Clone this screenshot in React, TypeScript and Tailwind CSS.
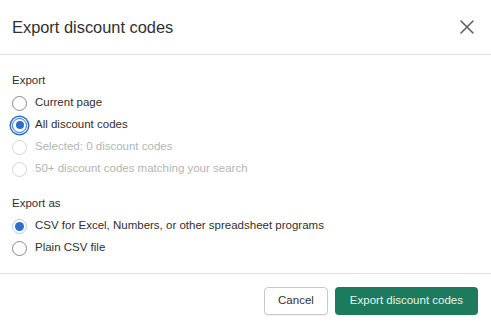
import React from "react";

type RadioState = "off" | "on" | "focus" | "disabled";

function Radio({ state }: { state: RadioState }) {
  if (state === "off") {
    return <span className="block w-[15px] h-[15px] rounded-full border border-[#8a8a8a] bg-white" />;
  }
  if (state === "disabled") {
    return <span className="block w-[15px] h-[15px] rounded-full border border-[#d4d4d4] bg-white" />;
  }
  if (state === "on") {
    return (
      <span className="flex items-center justify-center w-[15px] h-[15px] rounded-full border border-[#b9c9e2] bg-white">
        <span className="block w-[9px] h-[9px] rounded-full bg-[#2c6ecb]" />
      </span>
    );
  }
  return (
    <span className="flex items-center justify-center w-[15px] h-[15px] rounded-full border-[1.5px] border-[#2c6ecb] bg-white shadow-[0_0_0_1px_#ffffff,0_0_0_2.5px_#2c6ecb]">
      <span className="block w-[8px] h-[8px] rounded-full bg-[#2c6ecb]" />
    </span>
  );
}

function Row({ state, label }: { state: RadioState; label: string }) {
  const disabled = state === "disabled";
  return (
    <div className="flex items-center h-[22px]">
      <Radio state={state} />
      <span className={`ml-[8px] text-[11.5px] ${disabled ? "text-[#b5b5b5]" : "text-[#303030]"}`}>{label}</span>
    </div>
  );
}

export default function App() {
  return (
    <div
      className="w-[491px] h-[324px] bg-white flex flex-col"
      style={{ fontFamily: "'Liberation Sans', Arial, sans-serif" }}
    >
      <div className="h-[55px] shrink-0 flex items-center justify-between pl-[12px] pr-[16px] border-b border-[#e3e3e3]">
        <span className="text-[16.4px] text-[#303030]">Export discount codes</span>
        <svg width="14" height="14" viewBox="0 0 14 14" className="mr-[1px]">
          <path d="M1 1 L13 13 M13 1 L1 13" stroke="#5c5c5c" strokeWidth="1.5" strokeLinecap="round" />
        </svg>
      </div>
      <div className="flex-1 px-[12px] pt-[15px] border-b border-[#e3e3e3]">
        <div className="text-[11.5px] text-[#303030] h-[22px] flex items-center">Export</div>
        <div className="flex flex-col">
          <Row state="off" label="Current page" />
          <Row state="focus" label="All discount codes" />
          <Row state="disabled" label="Selected: 0 discount codes" />
          <Row state="disabled" label="50+ discount codes matching your search" />
        </div>
        <div className="text-[11.5px] text-[#303030] h-[23px] flex items-center mt-[12px]">Export as</div>
        <div className="flex flex-col">
          <Row state="on" label="CSV for Excel, Numbers, or other spreadsheet programs" />
          <Row state="off" label="Plain CSV file" />
        </div>
      </div>
      <div className="h-[50px] shrink-0 flex items-start justify-end gap-[7px] pr-[13px] pt-[13px]">
        <button className="h-[28px] px-[13px] rounded-[4px] border border-[#c9c9c9] bg-white text-[11.5px] text-[#303030] shadow-[0_1px_0_rgba(0,0,0,0.05)]">
          Cancel
        </button>
        <button className="h-[28px] px-[15px] rounded-[4px] bg-[#1c7b5c] text-[11.5px] text-[#e8f3ee]">
          Export discount codes
        </button>
      </div>
    </div>
  );
}
